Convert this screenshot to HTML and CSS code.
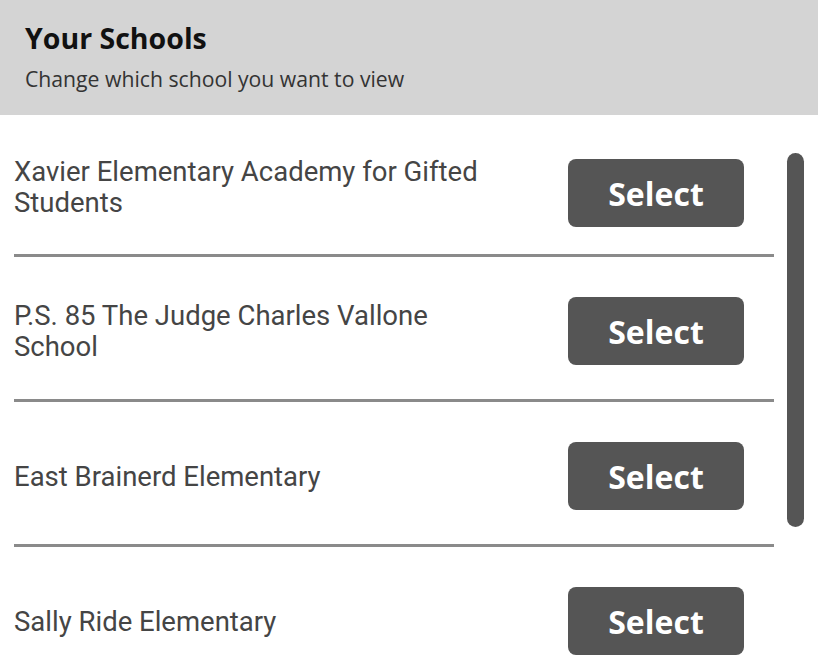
FILE: index.html
```html
<!DOCTYPE html>
<html lang="en">
<head>
<meta charset="utf-8">
<title>Your Schools</title>
<link rel="stylesheet" href="styles.css">
</head>
<body>
<header class="header">
  <h1 class="title">Your Schools</h1>
  <p class="subtitle">Change which school you want to view</p>
</header>
<main class="body">
  <ul class="list">
    <li class="row">
      <span class="name">Xavier Elementary Academy for Gifted Students</span>
      <button class="select">Select</button>
    </li>
    <li class="row">
      <span class="name">P.S. 85 The Judge Charles Vallone School</span>
      <button class="select">Select</button>
    </li>
    <li class="row">
      <span class="name">East Brainerd Elementary</span>
      <button class="select">Select</button>
    </li>
    <li class="row">
      <span class="name">Sally Ride Elementary</span>
      <button class="select">Select</button>
    </li>
  </ul>
  <div class="scrollbar"></div>
</main>
</body>
</html>
```

FILE: styles.css
```css
* { box-sizing: border-box; }
html, body { margin: 0; padding: 0; background: #fff; }
body { width: 818px; height: 665px; overflow: hidden; font-family: "Open Sans", sans-serif; }

.header {
  height: 115px;
  background: #d4d4d4;
  padding: 19px 25px 0;
}
.title {
  margin: 0;
  font-size: 28.5px;
  line-height: 38px;
  font-weight: 700;
  color: #111;
}
.subtitle {
  margin: 8px 0 0;
  font-size: 21.2px;
  line-height: 28px;
  color: #333;
}

.body {
  display: flex;
  padding-left: 14px;
}
.list {
  list-style: none;
  margin: 0;
  padding: 0;
  width: 760px;
}
.row {
  display: flex;
  align-items: center;
  justify-content: space-between;
  padding: 40px 30px 34px 0;
  border-bottom: 3px solid #8a8a8a;
}
.row:first-child {
  padding-top: 44px;
  padding-bottom: 27px;
}
.name {
  width: 500px;
  font-family: Roboto, sans-serif;
  font-size: 27.5px;
  line-height: 31px;
  color: #454545;
}
.row:first-child .name { margin-top: -12px; }
.select {
  width: 176px;
  height: 68px;
  border: 0;
  border-radius: 8px;
  background: #555;
  color: #fff;
  font-family: "Open Sans", sans-serif;
  font-weight: 700;
  font-size: 32px;
  padding: 0;
}
.scrollbar {
  width: 17px;
  height: 374px;
  margin: 38px 0 0 13px;
  background: #555;
  border-radius: 9px;
}
```
